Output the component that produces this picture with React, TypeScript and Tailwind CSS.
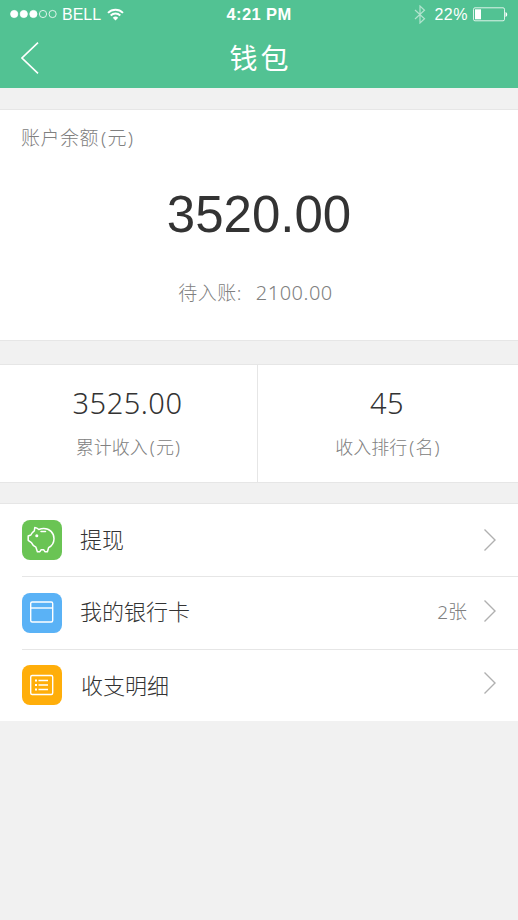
import React from 'react';

const Chevron = () => (
    <svg width="12" height="22" viewBox="0 0 12 22" fill="none" stroke="#b0b0b0" strokeWidth="1.4">
        <path d="M.5 .5 11 11 .5 21.500" />
    </svg>
);

const StatusBar = () => (
    <div className="flex h-7 items-center justify-between pl-[10px] pr-[10px] font-['Liberation_Sans',Arial,sans-serif] text-[16px] font-normal text-white">
        <div className="flex w-[180px] items-center">
            <svg width="48" height="10" viewBox="0 0 48 10" fill="#fff" stroke="#fff" strokeWidth=".8">
                <circle cx="4.200" cy="5" r="3.600" />
                <circle cx="13.800" cy="5" r="3.600" />
                <circle cx="23.400" cy="5" r="3.600" />
                <circle cx="33" cy="5" r="3.600" fill="none" />
                <circle cx="42.600" cy="5" r="3.600" fill="none" />
            </svg>
            <span className="ml-[4px] pt-px">BELL</span>
            <svg className="ml-[6px]" width="17" height="13" viewBox="0 0 17 13" fill="none" stroke="#fff" strokeWidth="1.900">
                <path d="M1 4.800a10.600 10.600 0 0 1 15 0M3.700 7.500a6.800 6.800 0 0 1 9.600 0" />
                <path d="M8.500 12.600 5.800 9.800a3.800 3.800 0 0 1 5.400 0z" fill="#fff" stroke="none" />
            </svg>
        </div>
        <span className="pt-px text-[16.500px] font-bold tracking-[0.400px]">4:21 PM</span>
        <div className="flex w-[180px] items-center justify-end">
            <svg width="12" height="19" viewBox="0 0 12 19" fill="none" stroke="#fff" strokeOpacity=".55" strokeWidth="1.200">
                <path d="M1 5l9.500 8.800L6 18V1l4.500 4.200L1 14" />
            </svg>
            <span className="ml-[8px] pt-px tracking-[0.5px]">22%</span>
            <svg className="ml-[5px]" width="35" height="15" viewBox="0 0 35 15">
                <rect x=".5" y=".8" width="31" height="13" rx="1.500" fill="none" stroke="#fff" strokeOpacity=".8" />
                <rect x="2" y="2.300" width="6" height="10" fill="#fff" />
                <path d="M32.500 5c2.300.8 2.300 4.200 0 5z" fill="#fff" />
            </svg>
        </div>
    </div>
);

const Header = () => (
    <header className="h-[88px] bg-[#52c293]">
        <StatusBar />
        <div className="grid h-[60px] grid-cols-3 items-center">
            <button className="pl-[21px]" aria-label="返回">
                <svg width="18" height="32" viewBox="0 0 18 32" fill="none" stroke="#fff" strokeWidth="1.600">
                    <path d="M17 .7 1 16l16 15.300" />
                </svg>
            </button>
            <h1 className="pl-[3px] text-center text-[28px] font-normal leading-[60px] tracking-[3px] text-white">钱包</h1>
        </div>
    </header>
);

const Unit = ({ children }: { children: string }) => (
    <span className="ml-[2px] tracking-[1.200px]">({children})</span>
);

const Balance = () => (
    <section className="mt-[21px] h-[232px] border-y border-[#e6e6e6] bg-white">
        <p className="pl-[21px] pt-[14px] text-[19px] leading-7 tracking-[0.5px] text-[#808080]">
            账户余额<Unit>元</Unit>
        </p>
        <p className="mt-[33px] text-center font-['Liberation_Sans',Arial,sans-serif] text-[51px] font-normal leading-[60px] text-[#333]">
            3520.00
        </p>
        <p className="mt-[34px] flex justify-center pr-[7px] text-[#808080]">
            <span className="text-[19px] leading-7 tracking-[0.500px]">待入账:</span>
            <span className="ml-[14px] text-[20px] leading-7 tracking-[0.500px]">2100.00</span>
        </p>
    </section>
);

const stats = [
    { value: '3525.00', label: '累计收入', unit: '元' },
    { value: '45', label: '收入排行', unit: '名' },
];

const Stats = () => (
    <section className="mt-[23px] grid h-[119px] grid-cols-[258px_1fr] divide-x divide-[#e6e6e6] border-y border-[#e6e6e6] bg-white">
        {stats.map((s) => (
            <div key={s.label} className="pt-[18px] text-center">
                <p className="pr-[2px] text-[29px] leading-10 tracking-[0.5px] text-[#333]">{s.value}</p>
                <p className="mt-[10px] text-[18px] leading-7 text-[#808080]">
                    {s.label}<Unit>{s.unit}</Unit>
                </p>
            </div>
        ))}
    </section>
);

const PiggyIcon = () => (
    <svg width="40" height="40" viewBox="0 0 40 40" fill="none" stroke="#fff" strokeWidth="1.500" strokeLinejoin="round" strokeLinecap="round">
        <path d="M12.800 7.600c1.700.2 3 1 4 1.900 1.600-.7 3.300-1 5-1 5.800 0 10.200 4.300 10.200 10.200 0 4-2.200 7.200-5.400 9l-1.200 4h-2.500l-1.300-2h-2.400l-1.300 2h-2.500l-1.500-4.500c-2-1-3.600-2.600-4.500-4.600L6.200 20.300V16l2.600-1c.7-1.600 1.900-3 3.500-4.100z" />
        <path d="M19 11.500h4.500" />
        <circle cx="14.800" cy="15.800" r=".8" fill="#fff" />
    </svg>
);

const CardIcon = () => (
    <svg width="40" height="40" viewBox="0 0 40 40" fill="none" stroke="#fff" strokeWidth="1.400">
        <rect x="8.700" y="9" width="22" height="20" rx="1.500" />
        <path d="M8.700 15h22" />
    </svg>
);

const ListIcon = () => (
    <svg width="40" height="40" viewBox="0 0 40 40" fill="none" stroke="#fff" strokeWidth="1.400">
        <rect x="8.700" y="10.500" width="22" height="19" rx="1.500" />
        <path d="M16.500 15.500h9.500M16.500 20h9.500M16.500 24.500h9.500" />
        <path d="M13 15.500h2M13 20h2M13 24.500h2" strokeWidth="1.800" />
    </svg>
);

const Menu = () => (
    <section className="mt-[20px] border-t border-[#e6e6e6] bg-white pl-[22px]">
        <div className="flex h-[73px] items-center border-b border-[#e6e6e6] pr-[22px]">
            <span className="rounded-[8px] bg-[#6ac454]"><PiggyIcon /></span>
            <span className="ml-[18px] pb-[3px] text-[22px] leading-8 text-[#333]">提现</span>
            <span className="ml-auto"><Chevron /></span>
        </div>
        <div className="flex h-[73px] items-center border-b border-[#e6e6e6] pr-[22px]">
            <span className="rounded-[8px] bg-[#5ab2f6]"><CardIcon /></span>
            <span className="ml-[18px] pb-[5px] text-[22px] leading-8 text-[#333]">我的银行卡</span>
            <span className="ml-auto pb-[2px] text-[19px] leading-7 text-[#808080]">2张</span>
            <span className="ml-[17px] pb-[4px]"><Chevron /></span>
        </div>
        <div className="flex h-[71px] items-center pr-[22px]">
            <span className="mb-[2px] rounded-[8px] bg-[#ffae0a]"><ListIcon /></span>
            <span className="ml-[19px] pb-[2px] text-[22px] leading-8 text-[#333]">收支明细</span>
            <span className="ml-auto pb-[6px]"><Chevron /></span>
        </div>
    </section>
);

export default function App() {
    return (
        <main className="min-h-screen w-full bg-[#f1f1f1] font-['Noto_Sans','Noto_Sans_CJK_SC',sans-serif] font-light [&_svg]:block">
            <Header />
            <Balance />
            <Stats />
            <Menu />
        </main>
    );
}
